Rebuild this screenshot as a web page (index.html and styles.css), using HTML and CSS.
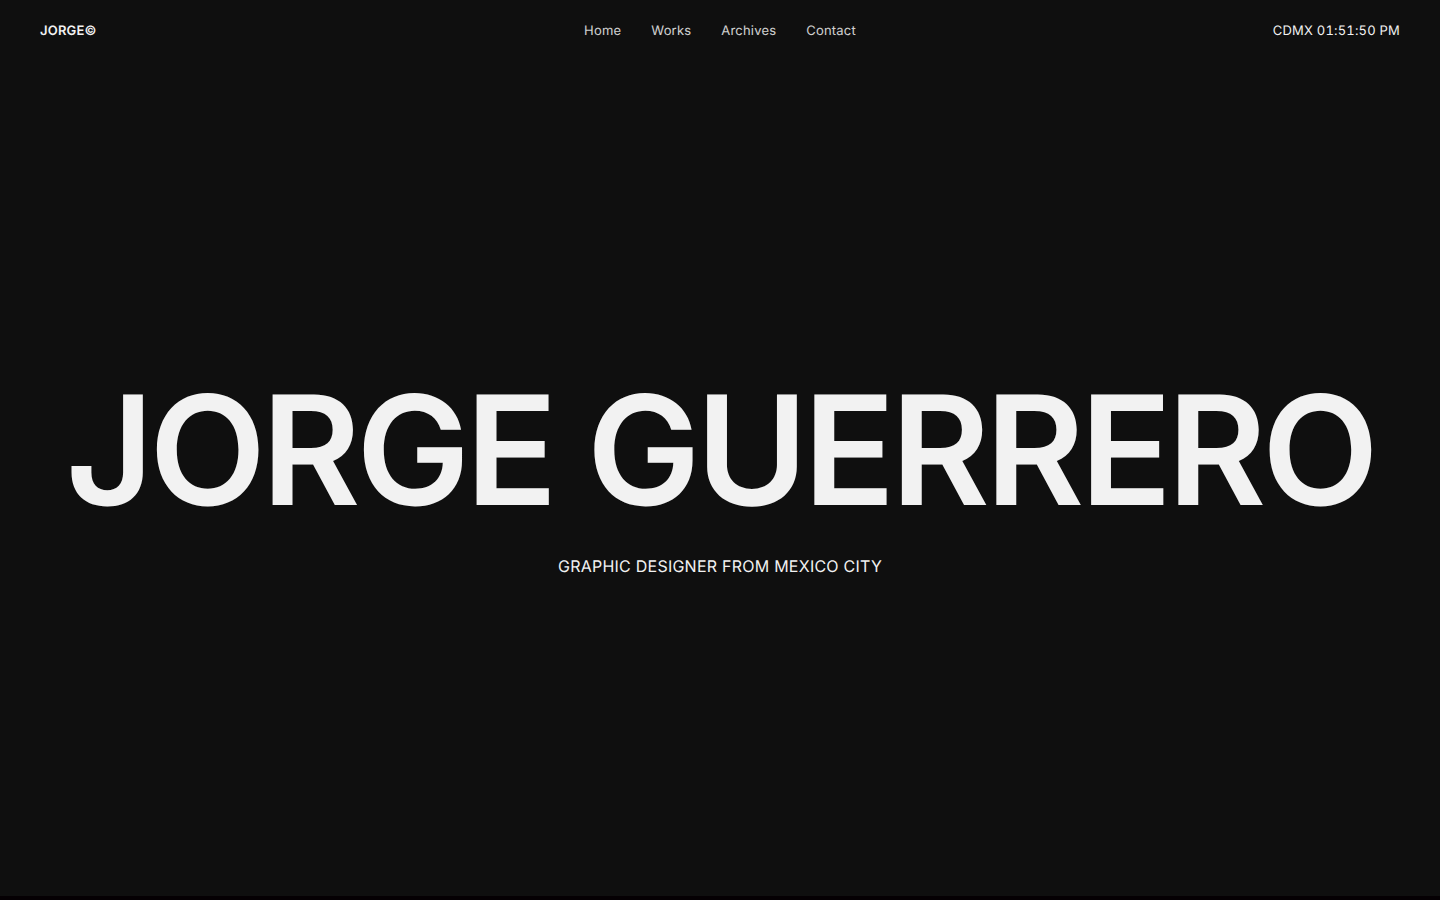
FILE: index.html
```
<!DOCTYPE html>
<html lang="en">
	<head>
		<meta charset="utf-8">
		<meta name="viewport" content="width=device-width, initial-scale=1">
		<title>JORGE GUERRERO</title>
		<link rel="stylesheet" href="styles.css">
	</head>
	<body>
		<header class="header">
			<a class="logo" href="#home">JORGE©</a>
			<nav class="nav">
				<a href="#home">Home</a>
				<a href="#works">Works</a>
				<a href="#archives">Archives</a>
				<a href="#contact">Contact</a>
			</nav>
			<div class="clock">CDMX 01:51:50 PM</div>
		</header>
		<main class="hero" id="home">
			<h1 class="title">JORGE GUERRERO</h1>
			<p class="subtitle">GRAPHIC DESIGNER FROM MEXICO CITY</p>
		</main>
	</body>
</html>
```
FILE: styles.css
```
* {
	margin: 0;
	padding: 0;
	box-sizing: border-box;
}

body {
	min-height: 100vh;
	display: flex;
	flex-direction: column;
	background-color: #0f0f0f;
	border-bottom: 4px solid #050003;
	color: #f2f2f2;
	font-family: Inter, "Liberation Sans", sans-serif;
	letter-spacing: 0.015em;
	text-rendering: geometricPrecision;
}

a {
	color: inherit;
	text-decoration: none;
}

.header {
	display: grid;
	grid-template-columns: 1fr auto 1fr;
	align-items: center;
	padding: 21px 40px 19px;
	font-size: 13px;
	line-height: 20px;
	letter-spacing: 0.015em;
}

.logo {
	font-weight: 600;
}

.nav {
	display: flex;
	gap: 30px;
}

.nav a {
	opacity: 0.85;
}

.clock {
	text-align: right;
	font-variant-numeric: tabular-nums;
}

.hero {
	flex: 1;
	display: flex;
	flex-direction: column;
	align-items: center;
	justify-content: center;
	padding-bottom: 4px;
	text-align: center;
}

.title {
	font-size: 152px;
	font-weight: 600;
	line-height: 152px;
	letter-spacing: -0.03em;
	white-space: nowrap;
}

.subtitle {
	margin-top: 28px;
	font-size: 16px;
	line-height: 24px;
}
```
